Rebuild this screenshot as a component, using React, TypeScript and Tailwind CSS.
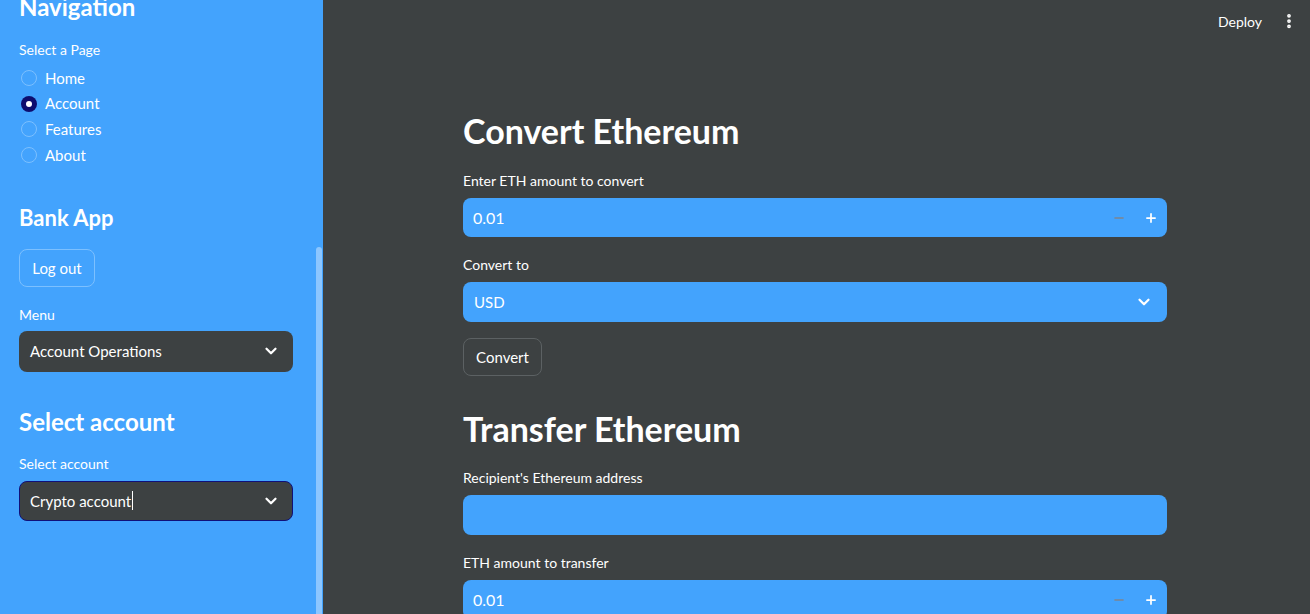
import { ChevronDown, Minus, Plus, EllipsisVertical } from 'lucide-react';

const pages = ['Home', 'Account', 'Features', 'About'];

const Chevron = () => <ChevronDown size={18} strokeWidth={3} className="text-white" />;

const NumberInput = ({ value }: { value: string }) => (
  <div className="flex h-[39px] items-center rounded-lg bg-[#43a3fd] pl-[10px]">
    <span className="flex-1 text-[16px] text-white">{value}</span>
    <span className="flex w-8 justify-center text-[#7d8590]">
      <Minus size={14} strokeWidth={2.5} />
    </span>
    <span className="flex w-8 justify-center text-white">
      <Plus size={14} strokeWidth={3} />
    </span>
  </div>
);

export default function App() {
  return (
    <div
      className="flex h-[614px] w-[1310px] overflow-hidden text-white"
      style={{ fontFamily: '"Source Sans Pro", Lato, "Noto Sans", sans-serif' }}
    >
      {/* sidebar */}
      <aside className="relative flex h-full w-[323px] shrink-0 flex-col bg-[#43a3fd] pl-[19px] pr-[30px]">
        <h2 className="-mt-[8px] text-[24px] font-bold leading-[30px]">Navigation</h2>
        <div className="mt-[18px] text-[14px] leading-5">Select a Page</div>
        <div className="mt-[5px] flex flex-col">
          {pages.map((p) => (
            <label key={p} className="flex h-[25.7px] items-center gap-[8px] pl-[2px] text-[15px]">
              {p === 'Account' ? (
                <span className="flex h-4 w-4 items-center justify-center rounded-full bg-[#0d0d6e]">
                  <span className="h-[6px] w-[6px] rounded-full bg-white" />
                </span>
              ) : (
                <span className="h-4 w-4 rounded-full border border-[#7cc0ff]" />
              )}
              {p}
            </label>
          ))}
        </div>
        <h2 className="mt-[36px] text-[22px] font-bold leading-7">Bank App</h2>
        <button className="mt-[17px] h-[38px] w-[76px] rounded-lg border border-[#7cc0ff] text-[15px]">
          Log out
        </button>
        <div className="mt-[18px] text-[14px] leading-5">Menu</div>
        <div className="mt-[6px] flex h-[41px] items-center justify-between rounded-lg bg-[#3d4142] pl-[11px] pr-[13px] text-[15px]">
          Account Operations
          <Chevron />
        </div>
        <h2 className="mt-[34px] text-[24px] font-bold leading-8">Select account</h2>
        <div className="mt-[16px] text-[14px] leading-5">Select account</div>
        <div className="mt-[7px] flex h-[40px] items-center justify-between rounded-lg border border-[#10107a] bg-[#3d4142] pl-[10px] pr-[12px] text-[15px]">
          <span className="flex items-center">
            Crypto account<span className="ml-[1px] inline-block h-[19px] w-px bg-white" />
          </span>
          <Chevron />
        </div>
        <div className="absolute bottom-0 right-[1px] top-[247px] w-[6px] rounded-t bg-[#8cc6ff]" />
      </aside>

      {/* main */}
      <main className="flex flex-1 flex-col bg-[#3d4142]">
        <header className="flex h-[42px] shrink-0 items-center justify-end pr-[12px] text-[14px]">
          <span className="mr-[18px]">Deploy</span>
          <EllipsisVertical size={18} strokeWidth={3} />
        </header>
        <div className="ml-[140px] w-[704px] shrink-0">
          <h1 className="mt-[67px] text-[34px] font-bold leading-[44px]">Convert Ethereum</h1>
          <div className="mt-[18px] text-[14px] leading-5">Enter ETH amount to convert</div>
          <div className="mt-[7px]">
            <NumberInput value="0.01" />
          </div>
          <div className="mt-[18px] text-[14px] leading-5">Convert to</div>
          <div className="mt-[7px] flex h-[40px] items-center justify-between rounded-lg bg-[#43a3fd] pl-[11px] pr-[14px] text-[15px]">
            USD
            <Chevron />
          </div>
          <button className="mt-[16px] h-[38px] w-[79px] rounded-lg border border-[#5c6163] text-[15px]">
            Convert
          </button>
          <h1 className="mt-[31px] text-[34px] font-bold leading-[44px]">Transfer Ethereum</h1>
          <div className="mt-[17px] text-[14px] leading-5">Recipient's Ethereum address</div>
          <div className="mt-[7px] h-[40px] rounded-lg bg-[#43a3fd]" />
          <div className="mt-[18px] text-[14px] leading-5">ETH amount to transfer</div>
          <div className="mt-[7px]">
            <NumberInput value="0.01" />
          </div>
        </div>
      </main>
    </div>
  );
}
